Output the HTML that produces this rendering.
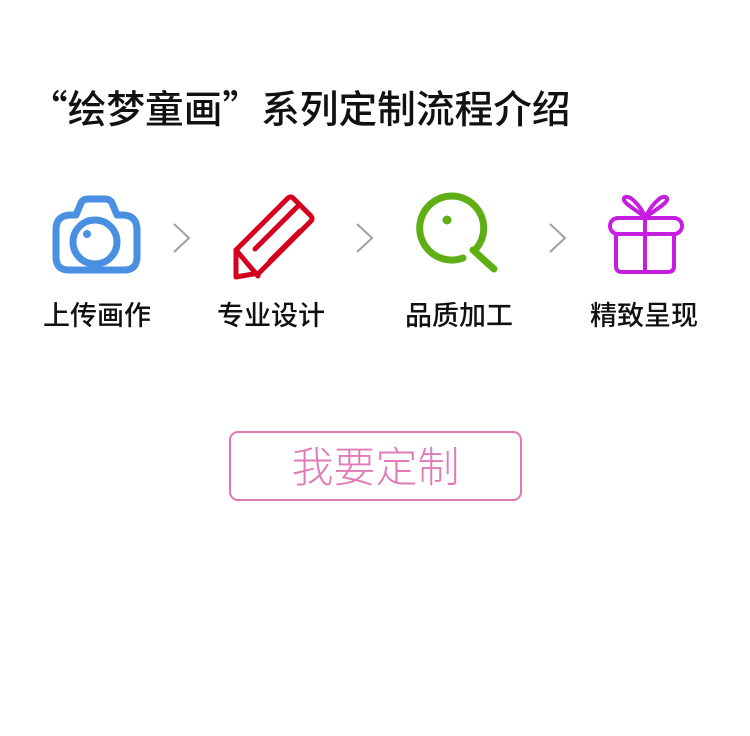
<!DOCTYPE html>
<html><head><meta charset="utf-8"><style>
body{margin:0;width:750px;height:736px;background:#fff;position:relative;font-family:"Liberation Sans","Noto Sans CJK SC",sans-serif;overflow:hidden}
.t{position:absolute;left:29px;top:79px;font-family:"Noto Sans CJK SC",sans-serif;font-size:38.7px;font-weight:500;color:#111;white-space:nowrap}
.l{position:absolute;top:294px;font-family:"Noto Sans CJK SC",sans-serif;font-size:27px;font-weight:500;color:#111;white-space:nowrap}
svg{position:absolute}
.btn{position:absolute;left:229px;top:431px;width:289px;height:66px;border:2px solid #e276b6;border-radius:9px;color:#e07ab8;font-size:42px;font-weight:300;text-align:center;line-height:64px;font-family:"Noto Sans CJK SC",sans-serif}
</style></head><body>
<div class="t">“绘梦童画”系列定制流程介绍</div>
<svg width="750" height="300" style="left:0;top:0">
<g fill="none" stroke="#4a90e2" stroke-width="7" stroke-linejoin="round">
<path d="M56 230 q0-15 15-15 h5 l5-12 q2-4 7-4 h17 q5 0 7 4 l5 12 h5 q15 0 15 15 v27 q0 13-13 13 h-55 q-13 0-13-13 z"/>
<circle cx="95" cy="242" r="22"/>
</g>
<circle cx="87" cy="234" r="4" fill="#4a90e2"/>
<g fill="none" stroke="#a0a0a0" stroke-width="2">
<path d="M174 224 l15 14 l-15 14"/><path d="M357 224 l15 14 l-15 14"/><path d="M550 224 l15 14 l-15 14"/>
</g>
<g fill="none" stroke="#d4001e" stroke-width="5" stroke-linejoin="round" stroke-linecap="round">
<path d="M236 250 l52-52 q3-2 5 0 l18 18 q2 3 0 5 l-52 52 l-23 4 z"/>
<path d="M236 250 l22 26"/>
<path d="M255 249 l42-42"/><path d="M270 261 l30-30"/>
</g>
<g fill="none" stroke="#5fae14" stroke-width="7" stroke-linecap="round">
<path d="M463 258 A32 32 0 1 1 475 250"/>
<path d="M473 250 l21 19"/>
</g>
<circle cx="447" cy="220" r="4.5" fill="#5fae14"/>
<g fill="none" stroke="#c61ee0" stroke-width="4" stroke-linejoin="round">
<rect x="610" y="218" width="72" height="16" rx="8"/>
<path d="M616 234 v32 q0 6 6 6 h46 q6 0 6-6 v-32"/>
<path d="M645 218 v54"/>
<path d="M645 217 C636 210 625 204 624 200 C623 196 628 196 632 199 C638 204 643 211 645 217 z"/>
<path d="M646 217 C655 210 666 204 667 200 C668 196 663 196 659 199 C653 204 648 211 646 217 z"/>
</g>
</svg>
<div class="l" style="left:43px">上传画作</div>
<div class="l" style="left:217px">专业设计</div>
<div class="l" style="left:405px">品质加工</div>
<div class="l" style="left:590px">精致呈现</div>
<div class="btn">我要定制</div>
</body></html>
